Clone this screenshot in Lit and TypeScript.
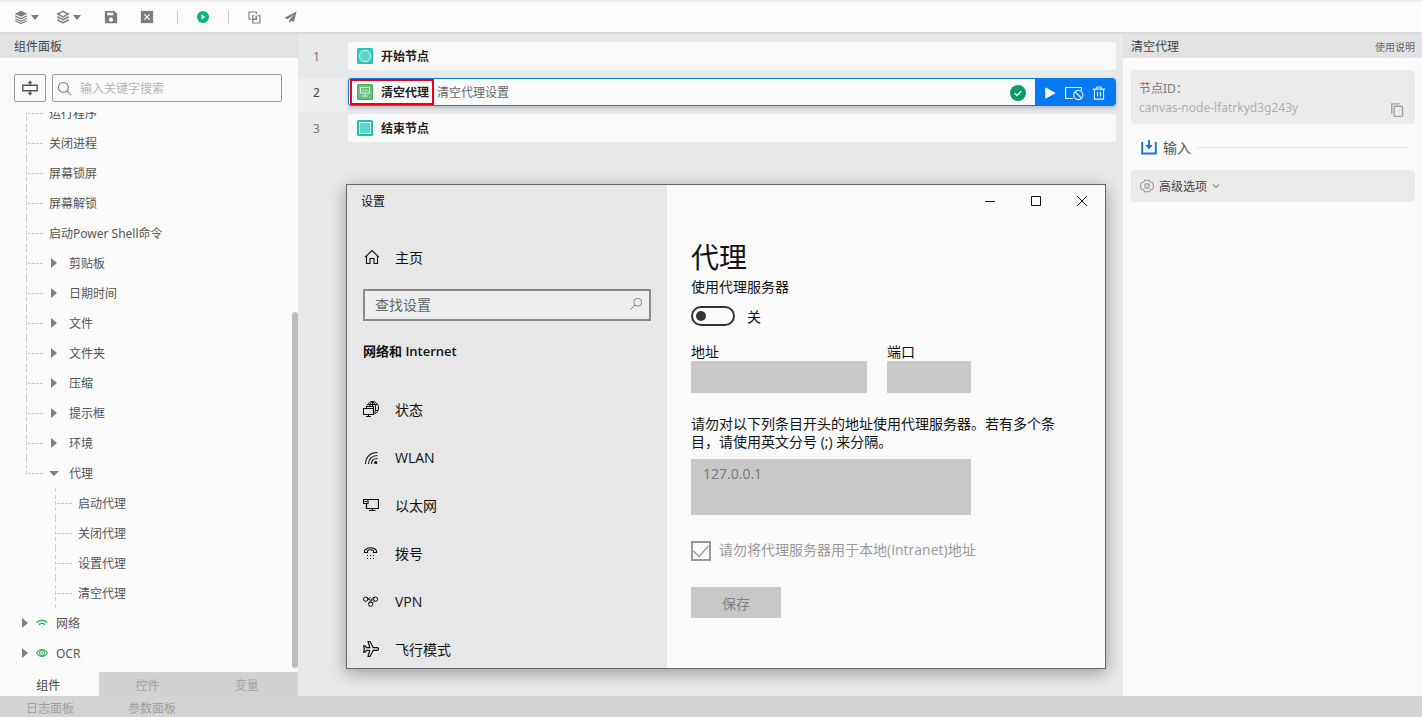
import { LitElement, html, svg, css, nothing } from "lit";
import { customElement, property, state } from "lit/decorators.js";
import { classMap } from "lit/directives/class-map.js";

const icons: Record<string, unknown> = {
  layersSolid: svg`<path d="M8 .8 15 4.200 8 7.800 1 4.200z" fill="currentColor"/><path d="M1.400 6.800 8 10.100l6.600-3.300M1.400 9.700 8 13l6.600-3.300M1.400 12.300 8 15.400l6.600-3.100" fill="none" stroke="currentColor" stroke-width="1.500"/>`,
  layers: svg`<path d="M8 1.500 14 4.700 8 7.900 2 4.700z" fill="none" stroke="currentColor" stroke-width="1.700"/><path d="M1.400 7.700 8 11 14.600 7.700M1.400 11.200 8 14.500l6.600-3.300" fill="none" stroke="currentColor" stroke-width="1.800"/>`,
  save: svg`<path fill-rule="evenodd" d="M1 1h11l3 3v11H1zM3.600 3v3h7V3zM8 8.600a2.400 2.400 0 1 0 .01 0z" fill="currentColor"/>`,
  closeBox: svg`<path d="M1 1h14v14H1z" fill="currentColor"/><path d="m5 5 6 6M11 5l-6 6" stroke="#fff" stroke-width="1.500"/>`,
  run: svg`<circle cx="8" cy="8" r="8" fill="#0bb678"/><path d="M6 4.800 11.300 8 6 11.200z" fill="#fff"/>`,
  copyStack: svg`<path d="M4 10.200H1.200v-9h9V4M6.500 10.200h3.700V6.500M11.500 5.800h3.300v9h-9v-9H8" fill="none" stroke="currentColor" stroke-width="1.400"/><path d="M5.800 10.200h4.400V5.800" fill="none" stroke="currentColor" stroke-width="1.400"/>`,
  send: svg`<path d="M15.500.6.500 8.200l4 1.800L12.600 4 6.400 11v4l2.400-2.900 3.400 1.500z" fill="currentColor"/>`,
  fold: svg`<path d="M.8 5.300h14.400v5.400H.8z" fill="none" stroke="currentColor" stroke-width="1.400"/><path d="M8 2v3.300M8 10.700V14" stroke="currentColor" stroke-width="1.400"/><path d="M5.400 3.200 8 .4l2.600 2.800zM5.400 12.800 8 15.600l2.600-2.800z" fill="currentColor"/>`,
  search: svg`<circle cx="6.800" cy="6.800" r="5.300" fill="none" stroke="currentColor" stroke-width="1.100"/><path d="m10.600 10.600 4.600 4.600" stroke="currentColor" stroke-width="1.100"/>`,
  searchFlip: svg`<circle cx="10" cy="6" r="4.500" fill="none" stroke="currentColor"/><path d="M6.800 9.200 1.500 14.500" stroke="currentColor"/>`,
  wifi: svg`<path d="M1 7.400C5 3.200 11 3.200 15 7.400M4 10.200c2.400-2.200 5.600-2.200 8 0" fill="none" stroke="#2fb357" stroke-width="2"/><path d="M7 12.200h2l-1 1.200z" fill="#2fb357"/>`,
  eye: svg`<path d="M.8 8C4.500 2 11.500 2 15.200 8 11.500 14 4.500 14 .8 8z" fill="none" stroke="#2fb357" stroke-width="1.400"/><circle cx="8" cy="8" r="3.400" fill="none" stroke="#2fb357" stroke-width="1.300"/><circle cx="8" cy="8" r="1.200" fill="none" stroke="#2fb357"/>`,
  nodeStart: svg`<rect width="16" height="16" rx="1.500" fill="#1fc0b0"/><rect x="1.500" y="1.500" width="13" height="13" fill="#48cec1"/><circle cx="8" cy="8" r="5.500" fill="#5cd4c8" stroke="#d4f5f1"/>`,
  nodeEnd: svg`<rect width="16" height="16" rx="1.500" fill="#1fc0b0"/><rect x="2.500" y="2.500" width="11" height="11" fill="#5cd4c8" stroke="#d4f5f1"/>`,
  nodeProxy: svg`<rect width="16" height="16" rx="1.500" fill="#3fae5c"/><rect x="1.200" y="1.200" width="13.600" height="13.600" fill="#6cc283"/><path d="M3.500 3.500h9v5.500h-9zM8 9v2.500M5 12h6" fill="none" stroke="#dff3e4"/><path d="M5 6.300h6" stroke="#b9e2c4"/>`,
  ok: svg`<circle cx="8" cy="8" r="8" fill="#0a9c68"/><path d="m4.600 8.200 2.400 2.300 4.400-4.400" fill="none" stroke="#fff" stroke-width="1.300"/>`,
  play: svg`<path d="M2.500 2.600c0-.8.6-1 1.200-.6l10 5.400c.5.300.5.900 0 1.200l-10 5.400c-.6.400-1.200.2-1.200-.6z" fill="#fff"/>`,
  trash: svg`<path d="M1 3.500h14M5.500 3.500V1.200h5v2.300M2.800 3.500V15h10.400V3.500M6.300 6.500v5.500M9.700 6.500v5.500" fill="none" stroke="#e6f1ff" stroke-width="1.300"/>`,
  copy: svg`<path d="M2 12V1h9" fill="none" stroke="currentColor" stroke-width="1.600"/><rect x="4.700" y="3.700" width="9.600" height="11.600" rx="1" fill="none" stroke="currentColor" stroke-width="1.600"/>`,
  input: svg`<path d="M1.200 3v11.500h13.600V3" fill="none" stroke="#1576d2" stroke-width="1.900"/><path d="M8 1v6" stroke="#1576d2" stroke-width="1.900"/><path d="M4.200 6h7.600L8 10.400z" fill="#1576d2"/>`,
  gear: svg`<path d="M5.200 1.500h5.600l1 2.300 2.700.4 1 3.800-1 3.800-2.700.4-1 2.300H5.200l-1-2.300-2.700-.4L.5 8l1-3.800 2.700-.4z" fill="none" stroke="currentColor" stroke-width="1.200" stroke-linejoin="round"/><circle cx="8" cy="8" r="2.700" fill="none" stroke="currentColor" stroke-width="1.200"/><circle cx="8" cy="8" r=".8" fill="currentColor"/>`,
  chevron: svg`<path d="m2 5 6 6 6-6" fill="none" stroke="currentColor" stroke-width="2.400"/>`,
  home: svg`<path d="M2 8.200 9 1.500l7 6.700M3.500 7v7.500H7V9.500h4v5h3.500V7" fill="none" stroke="currentColor" stroke-width="1.100"/>`,
  status: svg`<path d="M4 4.500C5.500 1.500 7.500.5 9.500.5c3.300 0 6 2.800 6 6.500 0 3-1.500 5-4 6M4.500 3.500h10M12 9.500h3M9.500.5C7.500 2 6.800 3.500 6.800 5.500M9.500.5c2.200 1.500 3 3.500 3 6.500s-.3 3.500-1 5M9.500.5v5" fill="none" stroke="currentColor"/><path d="M3.500 7.500v-2h7M.5 7.500h10v6H.5zM5.500 13.500v2M3 15.500h5M10.500 5.500v2" fill="none" stroke="currentColor" stroke-width="1.100"/>`,
  wlan: svg`<path d="M2.500 15C2.500 8 7.500 3.500 14.500 3.500M5.500 15c0-5 3.500-8.500 9-8.500M8.500 15c0-3.500 2.500-5.500 6-5.500" fill="none" stroke="currentColor" stroke-width="1.100"/><circle cx="12.800" cy="13.500" r="1.600" fill="currentColor"/>`,
  ethernet: svg`<path d="M5 2.500h10.500v9h-12V6.500M9.500 11.500v2M6 13.500h6.500" fill="none" stroke="currentColor" stroke-width="1.200"/><path d="M.5 2.500H5v4H.5zM1.500 4.500h2.500" fill="none" stroke="currentColor" stroke-width="1.200"/>`,
  dialup: svg`<path d="M1.500 7.500V5.500C4 1.800 11 1.800 13.500 5.500v2h-3V5.500c-2-1-4-1-6 0v2z" fill="none" stroke="currentColor" stroke-width="1.100"/><path d="M4 10h1v1H4zM7 10h1v1H7zM10 10h1v1h-1zM4 13h1v1H4zM7 13h1v1H7zM10 13h1v1h-1z" fill="currentColor"/>`,
  vpn: svg`<circle cx="2.600" cy="6.200" r="2.100" fill="none" stroke="currentColor"/><circle cx="12.600" cy="6.200" r="2.100" fill="none" stroke="currentColor"/><circle cx="7.600" cy="11.300" r="2.100" fill="none" stroke="currentColor"/><path d="M3.500 4.200c1.500 0 2 3 4 3S9 4.200 11.500 4.200M4.500 7.200c1.500-.2 1.500-2.700 3-2.700M5.600 10.500c0-2 3.900-2.500 4.400-4M9.600 10.500c.2-1.500 1.200-1.500 1.500-2.700" fill="none" stroke="currentColor"/>`,
  plane: svg`<path d="M15.500 8c0 1-.6 1.300-1.500 1.300h-3.700L7 15.500H5L6.800 9.300H3.500L2 11.200H.6L1.400 8 .6 4.800H2l1.500 1.900h3.300L5 .5h2l3.300 6.200H14c.9 0 1.500.3 1.500 1.300z" fill="none" stroke="currentColor" stroke-width="1.200" stroke-linejoin="round"/>`,
  minimize: svg`<path d="M3 8.500h10" stroke="currentColor"/>`,
  maximize: svg`<path d="M3.500 3.500h9v9h-9z" fill="none" stroke="currentColor"/>`,
  close: svg`<path d="m3 3 10 10M13 3 3 13" stroke="currentColor"/>`,
};

const icon = (name: string, size = 16, viewBox = "0 0 16 16") =>
  html`<svg width=${size} height=${size} viewBox=${viewBox} aria-hidden="true">${icons[name]}</svg>`;

const base = css`
  *, *::before { box-sizing: border-box; }
  svg { display: block; flex: none; }
  button, input, textarea { font: inherit; color: inherit; margin: 0; border-radius: 0; }
  button { background: none; border: 0; padding: 0; cursor: pointer; }
  h1, h2, h3, p, ul, ol { margin: 0; padding: 0; list-style: none; font: inherit; }
  a { color: inherit; text-decoration: none; }
`;

@customElement("tool-bar")
export class ToolBar extends LitElement {
  static styles = [base, css`
    :host { display: flex; box-sizing: border-box; align-items: center; height: 34px; padding: 0 14px; color: #7c7c7c;
      background: #fbfbfb; border-top: 2px solid #eeeeee; border-bottom: 2px solid #dadada; }
    .tool { display: flex; align-items: center; gap: 3px; }
    .menu { width: 42px; }
    .gap { width: 36px; }
    .caret { width: 8px; border: 4px solid transparent; border-top: 5px solid #7c7c7c; border-bottom: 0; }
    .sep { width: 1px; height: 13px; background: #c8c8c8; }
    .first { margin: 0 19px 0 1px; }
    .second { margin: 0 19px; }
    .menus { display: flex; margin-right: 6px; }
  `];
  render() {
    return html`
      <div class="menus">
        <button class="tool menu" aria-label="layers">${icon("layersSolid", 14)}<span class="caret"></span></button>
        <button class="tool menu" aria-label="stack">${icon("layers", 14)}<span class="caret"></span></button>
      </div>
      <button class="tool gap" aria-label="save">${icon("save", 14)}</button>
      <button class="tool gap" aria-label="close">${icon("closeBox", 14)}</button>
      <span class="sep first"></span>
      <button class="tool" aria-label="run">${icon("run", 12)}</button>
      <span class="sep second"></span>
      <button class="tool gap" aria-label="copy">${icon("copyStack", 13)}</button>
      <button class="tool" aria-label="publish">${icon("send", 13)}</button>
    `;
  }
}

interface TreeRow { text: string; level: 0 | 1 | 2; branch?: boolean; open?: boolean; last?: boolean; glyph?: string }

const rows: TreeRow[] = [
  ...["运行程序", "关闭进程", "屏幕锁屏", "屏幕解锁", "启动Power Shell命令"].map((text) => ({ text, level: 1 as const })),
  ...["剪贴板", "日期时间", "文件", "文件夹", "压缩", "提示框", "环境"].map((text) => ({ text, level: 1 as const, branch: true })),
  { text: "代理", level: 1, branch: true, open: true, last: true },
  ...["启动代理", "关闭代理", "设置代理", "清空代理"].map((text) => ({ text, level: 2 as const })),
  { text: "网络", level: 0, branch: true, glyph: "wifi" },
  { text: "OCR", level: 0, branch: true, glyph: "eye" },
];

@customElement("component-panel")
export class ComponentPanel extends LitElement {
  @state() private tab = "组件";
  static styles = [base, css`
    :host { display: flex; flex-direction: column; width: 298px; background: #fafafa; min-height: 0; }
    .title { height: 24px; line-height: 25px; padding: 0 14px; background: #e2e2e2; color: #444; }
    .find { display: flex; gap: 6px; padding: 16px 16px 10px 14px; }
    .fold { display: grid; place-items: center; width: 32px; height: 28px; border: 1px solid #9a9a9a; border-radius: 2px; color: #555; }
    .box { display: flex; flex: 1; align-items: center; gap: 8px; height: 28px; padding: 0 4px; border: 1px solid #9a9a9a; border-radius: 2px; color: #777; }
    .box input { flex: 1; min-width: 0; border: 0; padding: 0; background: none; outline: 0; }
    .box input::placeholder { color: #b4b4b8; opacity: 1; }
    .scroll { display: flex; flex: 1; min-height: 0; }
    .tree { display: flex; flex: 1; flex-direction: column; justify-content: flex-end; overflow: hidden; padding-bottom: 4px; color: #555; }
    .track { display: flex; align-items: flex-end; width: 6px; padding-bottom: 4px; }
    .thumb { width: 6px; height: 64%; border-radius: 3px; background: #bdbdbd; }
    .row { display: flex; flex: none; align-items: center; height: 30px; padding-left: 22px; }
    .l1 { padding-left: 26px; }
    .l2 { padding-left: 55px; }
    .rail { width: 17px; height: 30px; margin-right: 6px; --c: #cbcbd4; --n: transparent;
      background:
        linear-gradient(var(--c) 4px, var(--n) 4px 7px, var(--c) 7px 11px, var(--n) 11px 13px, var(--c) 13px 17px, var(--n) 17px 19px, var(--c) 19px 23px, var(--n) 23px 26px, var(--c) 26px) 0 0 / 1px 30px no-repeat,
        repeating-linear-gradient(90deg, var(--c) 0 3px, var(--n) 3px 4px) 2px 15px / 15px 1px no-repeat; }
    .last { height: 16px; margin-bottom: 14px; background-position: 0 0, 2px 15px; }
    .arrow { width: 6px; border: 5px solid transparent; border-left: 6px solid #808080; border-right: 0; margin: 0 12px 0 2px; }
    .l0 .arrow { margin: 0 8px 0 0; }
    .open { width: 10px; border: 5px solid transparent; border-top: 5px solid #808080; border-bottom: 0; margin: 0 10px 0 0; }
    .name { display: flex; align-items: center; gap: 8px; }
    .tabs { display: flex; height: 24px; background: #d1d1d1; color: #a2a2a2; }
    .tabs button { flex: 1; padding: 1px 3px 0 0; }
    .tabs .on { background: #fafafa; color: #444; }
  `];
  private row(r: TreeRow) {
    return html`<li class="row l${r.level}">
      ${r.level ? html`<span class=${classMap({ rail: true, last: !!r.last })}></span>` : nothing}
      ${r.branch ? html`<span class=${r.open ? "open" : "arrow"}></span>` : nothing}
      <span class="name">${r.glyph ? icon(r.glyph, 12) : nothing}${r.text}</span>
    </li>`;
  }
  render() {
    return html`
      <h2 class="title">组件面板</h2>
      <div class="find">
        <button class="fold" aria-label="fold">${icon("fold", 16)}</button>
        <label class="box">${icon("search", 15)}<input type="text" aria-label="search" placeholder="输入关键字搜索" /></label>
      </div>
      <div class="scroll">
        <ul class="tree">${rows.map((r) => this.row(r))}</ul>
        <div class="track"><span class="thumb"></span></div>
      </div>
      <div class="tabs">
        ${["组件", "控件", "变量"].map((t) => html`<button class=${classMap({ on: t === this.tab })} @click=${() => (this.tab = t)}>${t}</button>`)}
      </div>
    `;
  }
}

@customElement("flow-node")
export class FlowNode extends LitElement {
  @property({ type: Number }) number = 1;
  @property() glyph = "";
  @property() name = "";
  @property() note = "";
  @property({ type: Boolean, reflect: true }) selected = false;
  static styles = [base, css`
    :host { display: flex; height: 36px; color: #777; }
    .number { width: 50px; height: 34px; padding-right: 13px; line-height: 29px; text-align: center; }
    :host([selected]) .number { background: #efefef; color: #444; }
    .card { display: flex; flex: 1; align-items: center; height: 28px; padding-left: 2px; border-radius: 3px; background: #fafafa; overflow: hidden; }
    :host([selected]) .card { padding-left: 1px; border: 1px solid #0a7cf0; box-shadow: 0 2px 4px #b5bcc6; }
    .name { display: flex; align-items: center; gap: 8px; height: 26px; padding: 0 3px 0 5px; border: 2px solid transparent; color: #222; font-weight: 700; }
    :host([selected]) .name { border-color: #f0000f; }
    .note { flex: 1; padding-left: 3px; color: #666; }
    .ok { margin-right: 9px; padding-top: 1px; }
    .actions { display: flex; align-items: center; gap: 8px; width: 80px; height: 26px; padding: 1px 0 0 8px; background: #0579f2; }
  `];
  render() {
    return html`
      <span class="number">${this.number}</span>
      <div class="card">
        <span class="name">${icon(this.glyph)}${this.name}</span>
        <span class="note">${this.note}</span>
        ${this.selected ? html`
          <span class="ok">${icon("ok")}</span>
          <span class="actions">
            <button aria-label="run node">${icon("play", 14)}</button>
            <button aria-label="disable node"><svg width="19" height="16" viewBox="0 0 19 16" fill="none" stroke="#e6f1ff" stroke-width="1.200"><path d="M8 13.500H.6V2.500h15.800v3"/><circle cx="13.300" cy="10" r="4.600"/><path d="m10 6.800 6.600 6.400"/></svg></button>
            <button aria-label="delete node">${icon("trash", 14)}</button>
          </span>` : nothing}
      </div>
    `;
  }
}

@customElement("settings-window")
export class SettingsWindow extends LitElement {
  static styles = [base, css`
    :host { display: flex; border: 1px solid #666; background: #fafafa; color: #111; overflow: hidden;
      font: 14px "Open Sans", "Noto Sans CJK SC", sans-serif; box-shadow: 0 4px 16px rgba(0, 0, 0, 0.35); }
    .side { width: 320px; flex: none; background: #e7e7e7; padding: 0 16px; overflow: hidden; }
    .title { height: 32px; line-height: 33px; font-size: 12px; margin-left: -2px; }
    .item { display: flex; align-items: center; gap: 16px; height: 48px; }
    .home { margin-top: 16px; }
    .find { display: flex; align-items: center; height: 32px; margin-top: 8px; padding: 0 6px 2px 10px; border: 2px solid #8a8a8a; background: #eeeeee; color: #777; }
    .find input { flex: 1; min-width: 0; border: 0; padding: 0; background: none; outline: 0; }
    .find input::placeholder { color: #666; opacity: 1; }
    .group { margin: 15px 0 19px; height: 30px; line-height: 30px; font-size: 13px; font-weight: 600; }
    .main { flex: 1; min-width: 0; padding-left: 24px; }
    .controls { display: flex; justify-content: flex-end; height: 32px; }
    .controls button { display: grid; place-items: center; width: 46px; }
    .heading { margin-top: 22px; height: 39px; line-height: 36px; font-size: 28px; }
    .label { display: block; line-height: 18px; }
    .switch { display: flex; align-items: center; gap: 12px; height: 20px; margin: 10px 0 17px; }
    .toggle { appearance: none; display: flex; align-items: center; width: 44px; height: 20px; padding-left: 3px; border: 2px solid #333; border-radius: 10px; }
    .toggle::before { content: ""; width: 10px; height: 10px; border-radius: 5px; background: #333; }
    .fields { display: flex; gap: 20px; }
    .field { display: block; height: 32px; border: 0; background: #c8c8c8; padding: 0 12px; }
    .address { width: 176px; }
    .port { width: 84px; }
    .text { max-width: 372px; margin-top: 22px; }
    .skip { display: block; width: 280px; height: 56px; margin-top: 8px; padding: 6px 12px; border: 0; resize: none; background: #c8c8c8; color: #777; line-height: 18px; }
    .check { display: flex; align-items: center; gap: 8px; position: relative; margin-top: 26px; height: 20px; line-height: 18px; color: #999; }
    .check input { appearance: none; width: 20px; height: 20px; border: 2px solid #999; }
    .check span { padding-bottom: 2px; }
    .check svg { position: absolute; left: 0; top: 0; }
    .save { width: 90px; height: 31px; margin-top: 26px; background: #c8c8c8; color: #808080; }
  `];
  render() {
    const items = [["status", "状态"], ["wlan", "WLAN"], ["ethernet", "以太网"], ["dialup", "拨号"], ["vpn", "VPN"], ["plane", "飞行模式"]];
    return html`
      <nav class="side">
        <h2 class="title">设置</h2>
        <a class="item home" href="#home">${icon("home")}主页</a>
        <label class="find"><input type="text" aria-label="find" placeholder="查找设置" />${icon("searchFlip", 14)}</label>
        <h3 class="group">网络和 Internet</h3>
        ${items.map(([g, t]) => html`<a class="item" href="#${g}">${icon(g)}${t}</a>`)}
      </nav>
      <section class="main">
        <div class="controls">
          <button aria-label="minimize">${icon("minimize")}</button>
          <button aria-label="maximize">${icon("maximize")}</button>
          <button aria-label="close">${icon("close")}</button>
        </div>
        <h1 class="heading">代理</h1>
        <label class="label" for="proxy">使用代理服务器</label>
        <div class="switch"><input class="toggle" id="proxy" type="checkbox" role="switch" /><span>关</span></div>
        <div class="fields">
          <div><label class="label" for="address">地址</label><input class="field address" id="address" type="text" disabled /></div>
          <div><label class="label" for="port">端口</label><input class="field port" id="port" type="text" disabled /></div>
        </div>
        <label class="label text" for="skip">请勿对以下列条目开头的地址使用代理服务器。若有多个条目，请使用英文分号 (;) 来分隔。</label>
        <textarea class="skip" id="skip" disabled .value=${"127.0.0.1"}></textarea>
        <label class="check"><input type="checkbox" checked disabled /><svg width="20" height="20" viewBox="0 0 20 20"><path d="m2.500 10 5.500 5.500 9.500-10.500" fill="none" stroke="#999" stroke-width="1.300"/></svg><span>请勿将代理服务器用于本地(Intranet)地址</span></label>
        <button class="save" disabled>保存</button>
      </section>
    `;
  }
}

@customElement("node-panel")
export class NodePanel extends LitElement {
  static styles = [base, css`
    :host { display: block; width: 299px; background: #fafafa; color: #555; }
    .title { display: flex; justify-content: space-between; align-items: center; height: 24px; padding: 0 7px 0 8px; background: #e2e2e2; color: #444; }
    .help { font-size: 10px; color: #666; }
    .body { padding: 12px 7px 0 8px; }
    .id { display: flex; box-sizing: border-box; justify-content: space-between; align-items: flex-end; height: 54px; padding: 9px 11px 7px 8px; border-radius: 4px; background: #ebebeb; line-height: 19px; color: #777; }
    .value { color: #b0b0b0; }
    .copy { color: #a2a2a2; }
    .section { display: flex; align-items: center; gap: 6px; height: 20px; margin: 13px 8px 13px 10px; font-size: 14px; }
    .rule { flex: 1; height: 1px; background: #e2e2e2; }
    .more { display: flex; align-items: center; gap: 5px; width: 100%; height: 32px; padding: 0 9px; border-radius: 4px; background: #ebebeb; color: #444; }
    .gear, .chev { color: #999; }
  `];
  render() {
    return html`
      <div class="title"><h2>清空代理</h2><a class="help" href="#help">使用说明</a></div>
      <div class="body">
        <div class="id">
          <div><p>节点ID：</p><p class="value">canvas-node-lfatrkyd3g243y</p></div>
          <button class="copy" aria-label="copy id">${icon("copy", 14)}</button>
        </div>
        <div class="section">${icon("input")}<h3>输入</h3><span class="rule"></span></div>
        <button class="more"><span class="gear">${icon("gear", 14)}</span>高级选项<span class="chev">${icon("chevron", 8)}</span></button>
      </div>
    `;
  }
}

@customElement("app-root")
export class AppRoot extends LitElement {
  static styles = [base, css`
    :host { display: flex; flex-direction: column; height: 100vh; overflow: hidden; font: 12px "Noto Sans", "Noto Sans CJK SC", sans-serif; }
    .work { display: flex; flex: 1; min-height: 0; }
    .canvas { position: relative; flex: 1; min-width: 0; padding: 8px 7px 0 0; background: #e7e9eb; }
    .window { position: absolute; inset: 150px 17px 27px 48px; }
    .dock { display: flex; gap: 54px; height: 21px; padding: 3px 26px 0; background: #d3d3d3; color: #a0a0a0; }
  `];
  render() {
    return html`
      <tool-bar></tool-bar>
      <div class="work">
        <component-panel></component-panel>
        <main class="canvas">
          <flow-node number="1" glyph="nodeStart" name="开始节点"></flow-node>
          <flow-node number="2" glyph="nodeProxy" name="清空代理" note="清空代理设置" selected></flow-node>
          <flow-node number="3" glyph="nodeEnd" name="结束节点"></flow-node>
          <settings-window class="window"></settings-window>
        </main>
        <node-panel></node-panel>
      </div>
      <footer class="dock"><button>日志面板</button><button>参数面板</button></footer>
    `;
  }
}
